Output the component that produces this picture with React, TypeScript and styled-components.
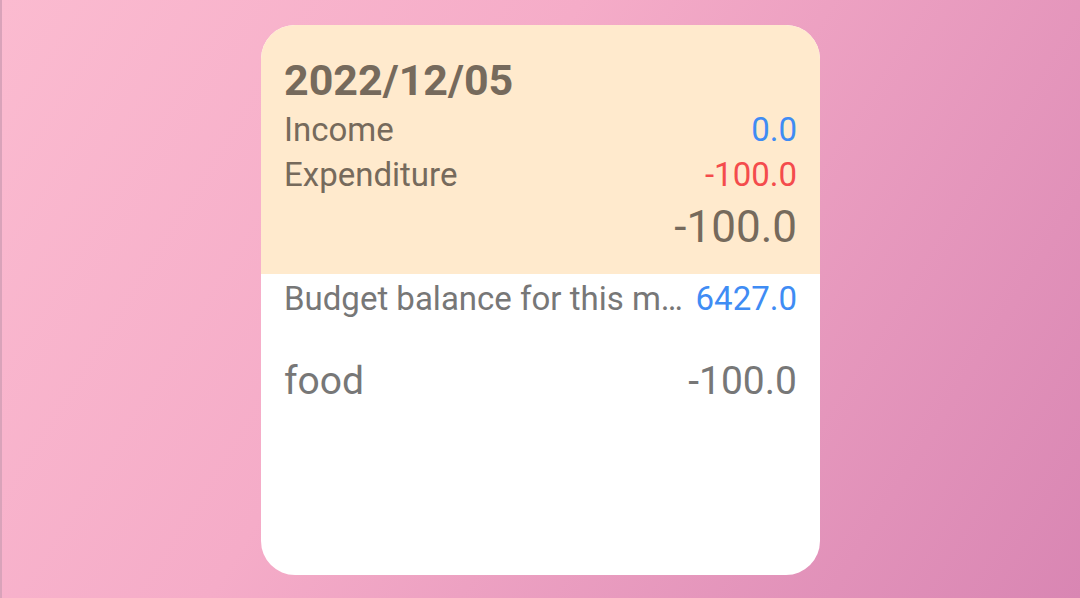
import React from "react";
import styled, { createGlobalStyle } from "styled-components";

const Global = createGlobalStyle`
  html, body { margin: 0; padding: 0; }
  body { font-family: Roboto, "Liberation Sans", sans-serif; }
`;

const Screen = styled.div`
  width: 1080px;
  height: 598px;
  box-sizing: border-box;
  background: linear-gradient(122deg, #fbbbd0 0%, #f5acc8 40%, #d986b3 100%);
  box-shadow: inset 2px 0 0 #d9a3ba;
  display: flex;
  justify-content: center;
  padding-top: 25px;
  padding-left: 1px;
`;

const Card = styled.div`
  width: 559px;
  height: 550px;
  border-radius: 34px;
  overflow: hidden;
  background: #ffffff;
  display: flex;
  flex-direction: column;
`;

const Header = styled.div`
  background: #ffeacd;
  height: 249px;
  box-sizing: border-box;
  padding: 28px 23px 0 23px;
  display: flex;
  flex-direction: column;
  color: #766a5c;
`;

const DateTitle = styled.div`
  font-size: 43px;
  font-weight: 700;
  line-height: 54px;
`;

const Row = styled.div<{ $size: number; $lh: number }>`
  display: flex;
  justify-content: space-between;
  align-items: baseline;
  font-size: ${(p) => p.$size}px;
  line-height: ${(p) => p.$lh}px;
`;

const Label = styled.span<{ $color?: string }>`
  color: ${(p) => p.$color || "inherit"};
  white-space: nowrap;
`;

const Value = styled.span<{ $color?: string }>`
  color: ${(p) => p.$color || "inherit"};
  white-space: nowrap;
  flex-shrink: 0;
`;

const Total = styled.div`
  text-align: right;
  font-size: 44px;
  line-height: 56px;
  margin-top: 2px;
`;

const Body = styled.div`
  padding: 5px 23px 0 23px;
  display: flex;
  flex-direction: column;
  color: #777777;
`;

const BudgetRow = styled(Row)`
  gap: 10px;
`;

const CategoryRow = styled(Row)`
  margin-top: 37px;
`;

export default function App() {
  return (
    <>
      <Global />
      <Screen>
        <Card>
          <Header>
            <DateTitle>2022/12/05</DateTitle>
            <Row $size={33} $lh={45}>
              <Label>Income</Label>
              <Value $color="#3f8cf4">0.0</Value>
            </Row>
            <Row $size={33} $lh={45}>
              <Label>Expenditure</Label>
              <Value $color="#f44c4c">-100.0</Value>
            </Row>
            <Total>-100.0</Total>
          </Header>
          <Body>
            <BudgetRow $size={33} $lh={40}>
              <Label>Budget balance for this m…</Label>
              <Value $color="#3f8cf4">6427.0</Value>
            </BudgetRow>
            <CategoryRow $size={39} $lh={50}>
              <Label>food</Label>
              <Value>-100.0</Value>
            </CategoryRow>
          </Body>
        </Card>
      </Screen>
    </>
  );
}
